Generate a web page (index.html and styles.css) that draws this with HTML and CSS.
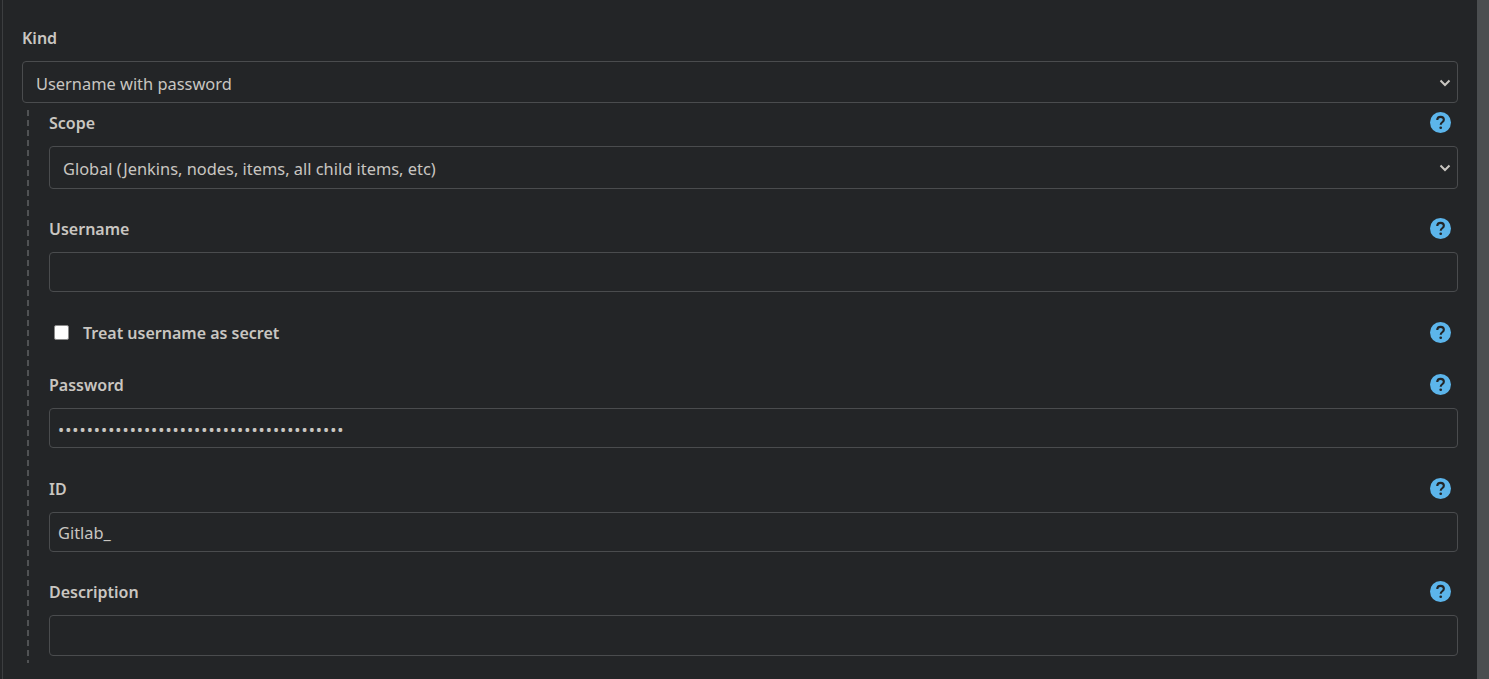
FILE: index.html
```html
<!DOCTYPE html>
<html lang="en">
<head>
    <meta charset="UTF-8">
    <meta name="viewport" content="width=device-width, initial-scale=1.0">
    <title>New credentials</title>
    <link rel="stylesheet" href="styles.css">
</head>
<body>
    <div class="page">
        <main class="form">
            <label class="field-label" for="kind">Kind</label>
            <div class="select-wrap">
                <select class="control control-select control-kind" id="kind">
                    <option>Username with password</option>
                </select>
                <svg class="chevron" viewBox="0 0 12 8" width="12" height="8"><path d="M1.5 1.5 6 6l4.500-4.500" fill="none" stroke="currentColor" stroke-width="2"/></svg>
            </div>

            <div class="nested">
                <div class="field field-first">
                    <div class="label-row">
                        <label class="field-label" for="scope">Scope</label>
                        <svg class="help" viewBox="0 0 20 20" width="21" height="21"><circle cx="10" cy="10" r="10" fill="#5cb5eb"/><path d="M6.900 7.700c0-1.900 1.300-3.100 3.200-3.100s3.100 1.100 3.100 2.700c0 2.500-3 2.400-3 4.800" fill="none" stroke="#232527" stroke-width="2"/><circle cx="10.200" cy="15" r="1.300" fill="#232527"/></svg>
                    </div>
                    <div class="select-wrap">
                        <select class="control control-select" id="scope">
                            <option>Global (Jenkins, nodes, items, all child items, etc)</option>
                        </select>
                        <svg class="chevron" viewBox="0 0 12 8" width="12" height="8"><path d="M1.5 1.5 6 6l4.500-4.500" fill="none" stroke="currentColor" stroke-width="2"/></svg>
                    </div>
                </div>

                <div class="field">
                    <div class="label-row">
                        <label class="field-label" for="username">Username</label>
                        <svg class="help" viewBox="0 0 20 20" width="21" height="21"><circle cx="10" cy="10" r="10" fill="#5cb5eb"/><path d="M6.900 7.700c0-1.900 1.300-3.100 3.200-3.100s3.100 1.100 3.100 2.700c0 2.500-3 2.400-3 4.800" fill="none" stroke="#232527" stroke-width="2"/><circle cx="10.200" cy="15" r="1.300" fill="#232527"/></svg>
                    </div>
                    <input class="control" type="text" id="username">
                </div>

                <div class="field check-row">
                    <input class="check" type="checkbox" id="secret">
                    <label class="field-label" for="secret">Treat username as secret</label>
                    <svg class="help" viewBox="0 0 20 20" width="21" height="21"><circle cx="10" cy="10" r="10" fill="#5cb5eb"/><path d="M6.900 7.700c0-1.900 1.300-3.100 3.200-3.100s3.100 1.100 3.100 2.700c0 2.500-3 2.400-3 4.800" fill="none" stroke="#232527" stroke-width="2"/><circle cx="10.200" cy="15" r="1.300" fill="#232527"/></svg>
                </div>

                <div class="field">
                    <div class="label-row">
                        <label class="field-label" for="password">Password</label>
                        <svg class="help" viewBox="0 0 20 20" width="21" height="21"><circle cx="10" cy="10" r="10" fill="#5cb5eb"/><path d="M6.900 7.700c0-1.900 1.300-3.100 3.200-3.100s3.100 1.100 3.100 2.700c0 2.500-3 2.400-3 4.800" fill="none" stroke="#232527" stroke-width="2"/><circle cx="10.200" cy="15" r="1.300" fill="#232527"/></svg>
                    </div>
                    <input class="control control-password" type="password" id="password" value="0123456789012345678901234567890123456789">
                </div>

                <div class="field">
                    <div class="label-row">
                        <label class="field-label" for="cred-id">ID</label>
                        <svg class="help" viewBox="0 0 20 20" width="21" height="21"><circle cx="10" cy="10" r="10" fill="#5cb5eb"/><path d="M6.900 7.700c0-1.900 1.300-3.100 3.200-3.100s3.100 1.100 3.100 2.700c0 2.500-3 2.400-3 4.800" fill="none" stroke="#232527" stroke-width="2"/><circle cx="10.200" cy="15" r="1.300" fill="#232527"/></svg>
                    </div>
                    <input class="control" type="text" id="cred-id" value="Gitlab_">
                </div>

                <div class="field">
                    <div class="label-row">
                        <label class="field-label" for="description">Description</label>
                        <svg class="help" viewBox="0 0 20 20" width="21" height="21"><circle cx="10" cy="10" r="10" fill="#5cb5eb"/><path d="M6.900 7.700c0-1.900 1.300-3.100 3.200-3.100s3.100 1.100 3.100 2.700c0 2.500-3 2.400-3 4.800" fill="none" stroke="#232527" stroke-width="2"/><circle cx="10.200" cy="15" r="1.300" fill="#232527"/></svg>
                    </div>
                    <input class="control" type="text" id="description">
                </div>
            </div>
        </main>
        <div class="scrollbar"></div>
    </div>
</body>
</html>
```

FILE: styles.css
```css
* {
    box-sizing: border-box;
}

body {
    margin: 0;
    height: 679px;
    overflow: hidden;
    background-color: #232527;
    color: #c9c6c1;
    font-family: 'Noto Sans', 'Open Sans', sans-serif;
    font-size: 16px;
}

.page {
    display: flex;
    height: 100%;
}

.form {
    flex: 1;
    margin-left: 2px;
    padding: 26px 19px 0 19px;
    border-left: 1px solid #3c3e40;
}

.scrollbar {
    width: 12px;
    background-color: #4b4e50;
}

.field-label {
    display: block;
    height: 24px;
    line-height: 25px;
    font-size: 16px;
    font-weight: 600;
}

.form > .field-label {
    margin-bottom: 11px;
}

.control {
    display: block;
    width: 100%;
    height: 40.4px;
    padding: 2px 8px 0;
    background-color: #232527;
    border: 1px solid #4a4c4e;
    border-radius: 4px;
    color: #c9c6c1;
    font-family: inherit;
    font-size: 16.4px;
    outline: none;
}

.control-select {
    height: 42.75px;
    padding-left: 13px;
    appearance: none;
}

.control-kind {
    height: 42px;
}

.control-password {
    letter-spacing: 1px;
}

.select-wrap {
    position: relative;
}

.chevron {
    position: absolute;
    top: 18px;
    right: 7px;
    color: #c9c6c1;
}

.nested {
    margin: 7px 0 0 5px;
    padding: 1px 0 7px 22px;
    background-image: repeating-linear-gradient(to bottom, #505254 0 6px, transparent 6px 10px);
    background-size: 2px 100%;
    background-repeat: no-repeat;
}

.field {
    margin-top: 28.25px;
}

.field-first {
    margin-top: 0;
}

.label-row {
    display: flex;
    justify-content: space-between;
    align-items: center;
    height: 24px;
    margin-bottom: 11px;
    padding-right: 7px;
}

.help {
    margin-bottom: 1px;
}

.check-row {
    display: flex;
    align-items: center;
    gap: 14px;
    height: 24px;
    padding: 0 7px 0 5px;
}

.check-row .help {
    margin-left: auto;
}

.check {
    width: 15px;
    height: 15px;
    margin: 0;
    appearance: none;
    background-color: #fff;
    border: 1px solid #8a8a8a;
    border-radius: 2px;
}
```
